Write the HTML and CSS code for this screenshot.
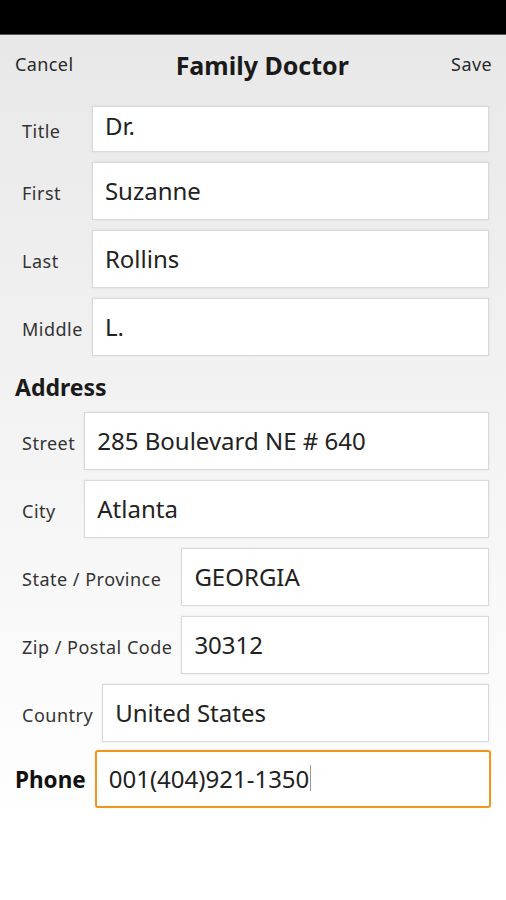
FILE: index.html
```html
<!DOCTYPE html>
<html lang="en">
<head>
    <meta charset="UTF-8">
    <meta name="viewport" content="width=device-width, initial-scale=1.0">
    <title>Family Doctor</title>
    <link rel="stylesheet" href="styles.css">
</head>
<body>
    <div class="status-bar"></div>

    <div class="screen">
        <div class="toolbar">
            <span class="toolbar-btn">Cancel</span>
            <h1>Family Doctor</h1>
            <span class="toolbar-btn">Save</span>
        </div>

        <div class="group group-name">
            <div class="row row-short">
                <span class="label">Title</span>
                <div class="field">Dr.</div>
            </div>
            <div class="row">
                <span class="label">First</span>
                <div class="field">Suzanne</div>
            </div>
            <div class="row">
                <span class="label">Last</span>
                <div class="field">Rollins</div>
            </div>
            <div class="row">
                <span class="label">Middle</span>
                <div class="field">L.</div>
            </div>
        </div>

        <h2>Address</h2>

        <div class="group">
            <div class="row">
                <span class="label">Street</span>
                <div class="field">285 Boulevard NE # 640</div>
            </div>
            <div class="row">
                <span class="label">City</span>
                <div class="field">Atlanta</div>
            </div>
        </div>

        <div class="group">
            <div class="row">
                <span class="label">State / Province</span>
                <div class="field">GEORGIA</div>
            </div>
            <div class="row">
                <span class="label">Zip / Postal Code</span>
                <div class="field">30312</div>
            </div>
        </div>

        <div class="group">
            <div class="row">
                <span class="label">Country</span>
                <div class="field">United States</div>
            </div>
        </div>

        <div class="group group-phone">
            <div class="row">
                <span class="label label-strong">Phone</span>
                <div class="field field-focus">001(404)921-1350<span class="caret"></span></div>
            </div>
        </div>
    </div>
</body>
</html>
```

FILE: styles.css
```css
:root {
    --text-color: #222222;
    --label-color: #333333;
    --border-color: #d9d9d9;
    --focus-color: #f0961c;
}

body {
    margin: 0;
    font-family: 'Noto Sans', 'Open Sans', sans-serif;
    color: var(--text-color);
    background: #ffffff;
}

.status-bar {
    height: 35px;
    background-color: #000000;
    border-bottom: 1px solid #555555;
    box-sizing: border-box;
}

.screen {
    min-height: 865px;
    padding: 0 17px 0 15px;
    background: linear-gradient(#e8e8e8 0%, #f3f3f3 45%, #ffffff 92%);
}

.toolbar {
    height: 60px;
    display: flex;
    align-items: center;
    justify-content: space-between;
    margin-right: -3px;
}

.toolbar h1 {
    margin: 0;
    font-size: 25px;
    font-weight: 700;
    color: #1a1a1a;
}

.toolbar-btn {
    font-size: 18px;
    letter-spacing: 0.4px;
    color: #2a2a2a;
    margin-top: -2px;
}

.group {
    display: grid;
    grid-template-columns: auto 1fr;
    column-gap: 9px;
    row-gap: 10px;
    margin-bottom: 10px;
    padding-left: 7px;
}

.group-name {
    margin-top: 11px;
}

.row {
    display: contents;
}

.label {
    align-self: center;
    font-size: 18px;
    letter-spacing: 0.5px;
    color: var(--label-color);
    padding-top: 3px;
}

.label-strong {
    font-size: 22.5px;
    letter-spacing: 0;
    font-weight: 700;
    color: #111111;
    margin-left: -7px;
    padding-top: 0;
}

.field {
    height: 58px;
    box-sizing: border-box;
    display: flex;
    align-items: center;
    padding: 0 12px 2px;
    background-color: #ffffff;
    border: 1px solid var(--border-color);
    box-shadow: 0 0 2px rgba(0, 0, 0, 0.08);
    font-size: 24px;
    color: var(--text-color);
}

.row-short .field {
    height: 46px;
    align-items: flex-start;
    padding-top: 2px;
}

h2 {
    margin: 18px 0 11px;
    font-size: 23px;
    font-weight: 700;
    color: #1a1a1a;
    line-height: 27px;
}

.group-phone {
    column-gap: 9px;
    margin-top: -2px;
}

.field-focus {
    border: 2px solid var(--focus-color);
    border-radius: 3px;
    padding-left: 12px;
    margin-right: -2px;
}

.caret {
    display: inline-block;
    width: 1px;
    height: 26px;
    margin-left: 1px;
    background-color: #999999;
}
```
